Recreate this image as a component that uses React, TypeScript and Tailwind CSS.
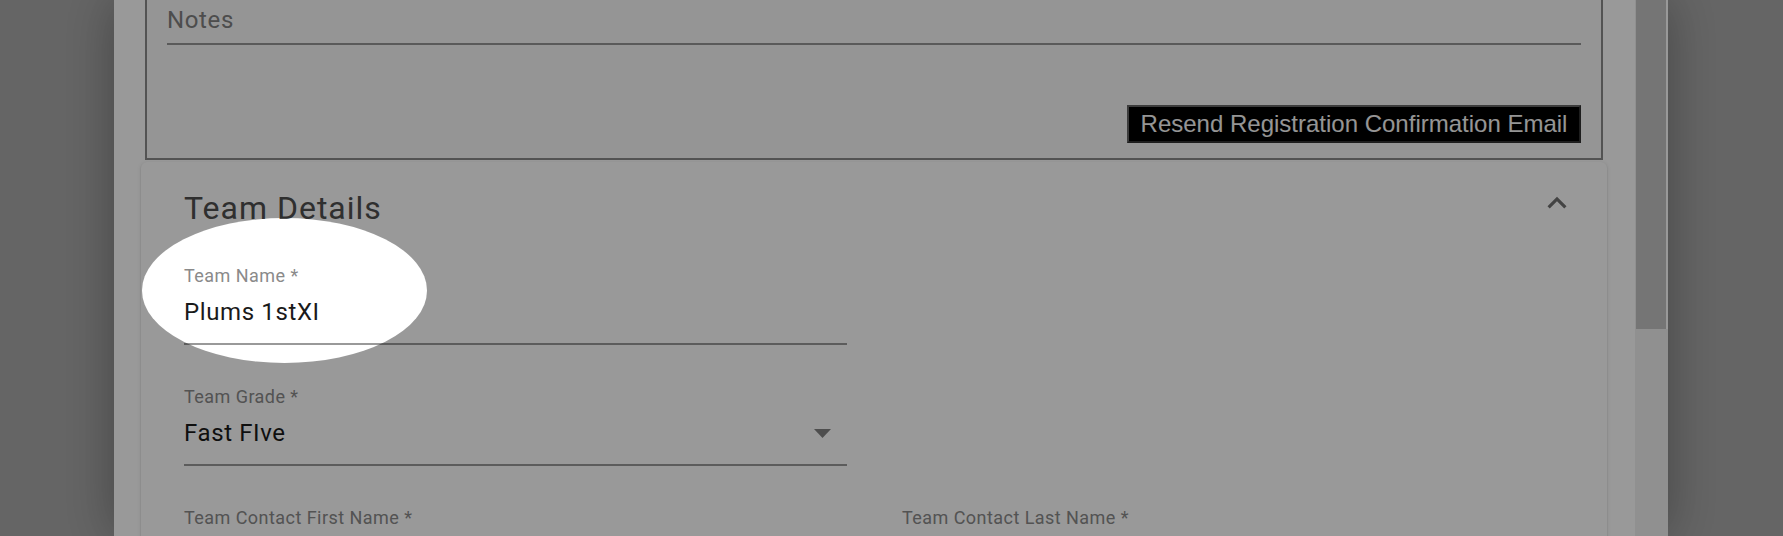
export default function App() {
  return (
    <div className="relative flex h-[536px] w-[1783px] overflow-hidden bg-[#a9a9a9] font-['Roboto',sans-serif]">
      <div className="w-[114px] shrink-0" />

      {/* dialog */}
      <div className="flex w-[1554px] shrink-0 bg-white shadow-[0_0_48px_rgba(0,0,0,0.32)]">
        <div className="w-[1521px] shrink-0 pl-[27px] pr-[28px]">
          <div className="-mt-[60px]">
            {/* registration box, scrolled up */}
            <div className="mx-[4px] border-2 border-[#8a8a8a] bg-[#f9f9f9] pt-[64px] pl-[20px] pr-[20px] pb-[15px]">
              <div className="text-[24px] leading-[28px] tracking-[0.65px] text-[#808080]">Notes</div>
              <div className="mt-[9px] h-[2px] bg-[#969696]" />
              <div className="mt-[60px] flex justify-end">
                <button
                  type="button"
                  className="flex h-[38px] w-[454px] items-center justify-center border-2 border-t-[#646464] border-l-[#646464] border-r-[#333] border-b-[#333] bg-black font-['Liberation_Sans',Arial,sans-serif] text-[24px] leading-[28px] text-[#f8f8f8]"
                >
                  Resend Registration Confirmation Email
                </button>
              </div>
            </div>

            {/* team details accordion */}
            <div className="mt-[2px] rounded-t-[6px] bg-white pb-[40px] shadow-[0_3px_1.5px_-1.5px_rgba(0,0,0,0.2),0_1.5px_1.5px_0_rgba(0,0,0,0.14),0_1.5px_4.5px_0_rgba(0,0,0,0.12)]">
              <div className="flex justify-between pl-[43px] pr-[31px]">
                <h2 className="mt-[28px] text-[32px] leading-[36px] tracking-[1px] text-[#4f4f4f]">Team Details</h2>
                <svg className="mt-[22px] h-[38px] w-[38px]" viewBox="0 0 24 24" fill="#717171">
                  <path d="M12 8l-6 6 1.41 1.41L12 10.83l4.59 4.58L18 14z" />
                </svg>
              </div>

              <div className="mt-[39px] grid grid-cols-2 gap-x-[55px] gap-y-[41px] pl-[43px] pr-[42px]">
                <Field label="Team Name *" value="Plums 1stXI" line="bg-[#999]" />
                <div />
                <Field label="Team Grade *" value="Fast FIve" line="bg-[#9a9a9a]" select />
                <div />
                <Field label="Team Contact First Name *" value="" line="bg-[#9a9a9a]" />
                <Field label="Team Contact Last Name *" value="" line="bg-[#9a9a9a]" />
              </div>
            </div>
          </div>
        </div>

        {/* scrollbar */}
        <div className="w-[33px] shrink-0 bg-[#f1f1f1] pl-[1px]">
          <div className="h-[329px] w-[32px] border-r-2 border-white bg-[#c4c4c4]" />
        </div>
      </div>

      <div className="w-[115px] shrink-0" />

      {/* tour spotlight */}
      <div className="pointer-events-none absolute left-[142px] top-[218px] h-[145px] w-[285px] rounded-[50%] shadow-[0_0_0_3000px_rgba(0,0,0,0.4)]" />
    </div>
  );
}

function Field({
  label,
  value,
  line,
  select,
}: {
  label: string;
  value: string;
  line: string;
  select?: boolean;
}) {
  return (
    <div>
      <div className="text-[18px] leading-[21px] tracking-[0.45px] text-[#8a8a8a]">{label}</div>
      <div className="mt-[12px] flex h-[28px] items-center justify-between">
        <span className="text-[24px] leading-[28px] tracking-[0.62px] text-[#1a1a1a]">{value}</span>
        {select && (
          <svg className="mr-[16px] h-[9px] w-[17px]" viewBox="0 0 17 9" fill="#838383">
            <polygon points="0,0 17,0 8.5,9" />
          </svg>
        )}
      </div>
      <div className={"mt-[17px] h-[2px] " + line} />
    </div>
  );
}
